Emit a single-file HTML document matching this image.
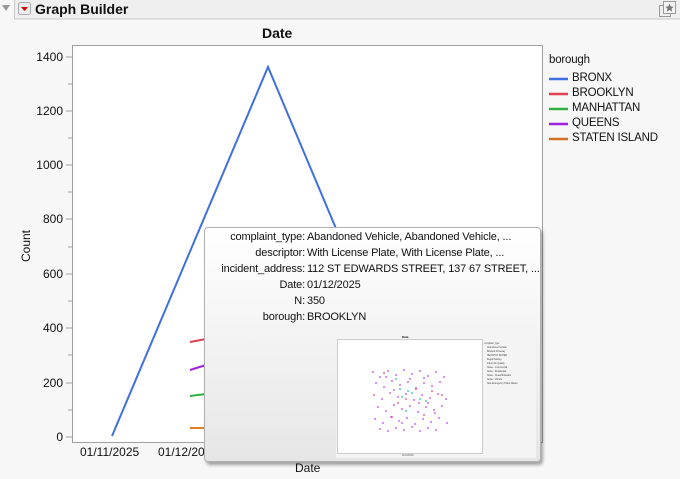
<!DOCTYPE html>
<html><head><style>
*{margin:0;padding:0;box-sizing:border-box}
body{width:680px;height:479px;background:#f7f7f7;font-family:"Liberation Sans",sans-serif;position:relative;overflow:hidden;color:#111}
.t{position:absolute;font-size:12px;white-space:nowrap}
.lg{font-size:11.5px;letter-spacing:-0.2px}
.tip{position:absolute;left:204px;top:227px;width:337px;height:235px;border:1px solid #b0b0b0;border-radius:4px;background:linear-gradient(#ffffff,#e6e6e6);box-shadow:2px 3px 3px rgba(0,0,0,.35)}
.tip .k{position:absolute;right:235px;font-size:11px;text-align:right;white-space:nowrap;letter-spacing:-0.15px}
.tip .v{position:absolute;left:102px;font-size:11px;white-space:nowrap;letter-spacing:-0.15px}
</style></head><body>
<svg style="position:absolute;left:0;top:0" width="680" height="479">
<rect x="14.5" y="-1" width="680" height="20" fill="#efefef" stroke="#c8c8c8"/>
<polygon points="2,5 10,5 6,11" fill="#999"/>
<rect x="18.5" y="2.5" width="12" height="12" rx="2" fill="#eee" stroke="#aaa"/>
<polygon points="21,7 28,7 24.5,11" fill="#c00"/>
<rect x="659.5" y="5.5" width="11" height="11" fill="#efefef" stroke="#999"/>
<rect x="663.5" y="1.5" width="12" height="12" fill="#f4f4f4" stroke="#999"/>
<polygon points="669.5,3.5 670.8,6.5 673.8,6.7 671.5,8.6 672.3,11.6 669.5,10 666.7,11.6 667.5,8.6 665.2,6.7 668.2,6.5" fill="#777"/>
<rect x="72.5" y="45.5" width="470" height="397" fill="#fff" stroke="#a0a0a0"/>
<g stroke="#a0a0a0">
<line x1="66" y1="57" x2="72" y2="57"/><line x1="68" y1="84" x2="72" y2="84"/>
<line x1="66" y1="111" x2="72" y2="111"/><line x1="68" y1="138" x2="72" y2="138"/>
<line x1="66" y1="165" x2="72" y2="165"/><line x1="68" y1="192" x2="72" y2="192"/>
<line x1="66" y1="219" x2="72" y2="219"/><line x1="68" y1="247" x2="72" y2="247"/>
<line x1="66" y1="274" x2="72" y2="274"/><line x1="68" y1="301" x2="72" y2="301"/>
<line x1="66" y1="328" x2="72" y2="328"/><line x1="68" y1="355" x2="72" y2="355"/>
<line x1="66" y1="383" x2="72" y2="383"/><line x1="68" y1="410" x2="72" y2="410"/>
<line x1="66" y1="437" x2="72" y2="437"/>
</g>
<polyline points="112,436 268,67 340,238" fill="none" stroke="#3f6fe0" stroke-width="2"/>
<line x1="190" y1="342" x2="206" y2="339" stroke="#e04050" stroke-width="2"/>
<line x1="190" y1="370" x2="206" y2="365" stroke="#a020e0" stroke-width="2"/>
<line x1="190" y1="396" x2="206" y2="394" stroke="#30b040" stroke-width="2"/>
<line x1="190" y1="428" x2="206" y2="428" stroke="#e08020" stroke-width="2"/>
<g stroke-width="2.5">
<line x1="549" y1="79" x2="568" y2="79" stroke="#3f6fe0"/>
<line x1="549" y1="94" x2="568" y2="94" stroke="#e04050"/>
<line x1="549" y1="109" x2="568" y2="109" stroke="#30b040"/>
<line x1="549" y1="124" x2="568" y2="124" stroke="#a020e0"/>
<line x1="549" y1="139" x2="568" y2="139" stroke="#d07020"/>
</g>
</svg>
<div class="t" style="left:35px;top:1px;font-size:14px;font-weight:bold">Graph Builder</div>
<div class="t" style="left:262px;top:25px;font-size:14px;font-weight:bold">Date</div>
<div class="t" style="left:0;top:50px;width:63px;text-align:right">1400</div>
<div class="t" style="left:0;top:104px;width:63px;text-align:right">1200</div>
<div class="t" style="left:0;top:158px;width:63px;text-align:right">1000</div>
<div class="t" style="left:0;top:212px;width:63px;text-align:right">800</div>
<div class="t" style="left:0;top:267px;width:63px;text-align:right">600</div>
<div class="t" style="left:0;top:321px;width:63px;text-align:right">400</div>
<div class="t" style="left:0;top:376px;width:63px;text-align:right">200</div>
<div class="t" style="left:0;top:430px;width:63px;text-align:right">0</div>
<div class="t" style="left:19px;top:262px;transform:rotate(-90deg);transform-origin:left top">Count</div>
<div class="t" style="left:80px;top:445px">01/11/2025</div>
<div class="t" style="left:158px;top:445px">01/12/2025</div>
<div class="t" style="left:295px;top:461px">Date</div>
<div class="t lg" style="left:549px;top:54px">borough</div>
<div class="t lg" style="left:572px;top:72px">BRONX</div>
<div class="t lg" style="left:572px;top:87px">BROOKLYN</div>
<div class="t lg" style="left:572px;top:102px">MANHATTAN</div>
<div class="t lg" style="left:572px;top:117px">QUEENS</div>
<div class="t lg" style="left:572px;top:132px">STATEN ISLAND</div>
<div class="tip">
<div class="k" style="top:3px">complaint_type:</div><div class="v" style="top:3px">Abandoned Vehicle, Abandoned Vehicle, ...</div>
<div class="k" style="top:19px">descriptor:</div><div class="v" style="top:19px">With License Plate, With License Plate, ...</div>
<div class="k" style="top:35px">incident_address:</div><div class="v" style="top:35px">112 ST EDWARDS STREET, 137 67 STREET, ...</div>
<div class="k" style="top:51px">Date:</div><div class="v" style="top:51px">01/12/2025</div>
<div class="k" style="top:67px">N:</div><div class="v" style="top:67px">350</div>
<div class="k" style="top:83px">borough:</div><div class="v" style="top:83px">BROOKLYN</div>
<svg style="position:absolute;left:131px;top:105px" width="200" height="125">
<rect x="0" y="0" width="200" height="125" fill="#f4f4f4"/>
<text x="66" y="5" font-size="3" font-weight="bold" font-family="Liberation Sans">Date</text>
<rect x="1.5" y="6.5" width="145" height="114" fill="#fff" stroke="#ccc"/>
<g font-size="2.3" font-family="Liberation Sans" fill="#444">
<text x="148" y="11">complaint_type</text>
<text x="151" y="15">Abandoned Vehicle</text><text x="151" y="19">Blocked Driveway</text>
<text x="151" y="23">HEAT/HOT WATER</text><text x="151" y="27">Illegal Parking</text>
<text x="151" y="31">Indoor Air Quality</text><text x="151" y="35">Noise - Commercial</text>
<text x="151" y="39">Noise - Residential</text><text x="151" y="43">Noise - Street/Sidewalk</text>
<text x="151" y="47">Noise - Vehicle</text><text x="151" y="51">Non-Emergency Police Matter</text>
</g>
<g fill="#c040f0">
<circle cx="37" cy="39" r=".9"/><circle cx="44" cy="44" r=".9"/><circle cx="52" cy="38" r=".9"/><circle cx="60" cy="42" r=".9"/><circle cx="68" cy="37" r=".9"/><circle cx="76" cy="41" r=".9"/><circle cx="84" cy="38" r=".9"/><circle cx="92" cy="43" r=".9"/><circle cx="100" cy="39" r=".9"/><circle cx="108" cy="44" r=".9"/>
<circle cx="40" cy="50" r=".9"/><circle cx="48" cy="54" r=".9"/><circle cx="56" cy="48" r=".9"/><circle cx="64" cy="52" r=".9"/><circle cx="72" cy="49" r=".9"/><circle cx="80" cy="55" r=".9"/><circle cx="88" cy="50" r=".9"/><circle cx="96" cy="53" r=".9"/><circle cx="104" cy="49" r=".9"/>
<circle cx="38" cy="62" r=".9"/><circle cx="46" cy="66" r=".9"/><circle cx="54" cy="60" r=".9"/><circle cx="62" cy="64" r=".9"/><circle cx="70" cy="61" r=".9"/><circle cx="78" cy="67" r=".9"/><circle cx="86" cy="62" r=".9"/><circle cx="94" cy="65" r=".9"/><circle cx="102" cy="61" r=".9"/><circle cx="110" cy="66" r=".9"/>
<circle cx="42" cy="74" r=".9"/><circle cx="50" cy="78" r=".9"/><circle cx="58" cy="72" r=".9"/><circle cx="66" cy="76" r=".9"/><circle cx="74" cy="73" r=".9"/><circle cx="82" cy="79" r=".9"/><circle cx="90" cy="74" r=".9"/><circle cx="98" cy="77" r=".9"/><circle cx="106" cy="73" r=".9"/>
<circle cx="39" cy="86" r=".9"/><circle cx="47" cy="90" r=".9"/><circle cx="55" cy="84" r=".9"/><circle cx="63" cy="88" r=".9"/><circle cx="71" cy="85" r=".9"/><circle cx="79" cy="91" r=".9"/><circle cx="87" cy="86" r=".9"/><circle cx="95" cy="89" r=".9"/><circle cx="103" cy="85" r=".9"/><circle cx="111" cy="90" r=".9"/>
<circle cx="44" cy="96" r=".9"/><circle cx="52" cy="98" r=".9"/><circle cx="60" cy="95" r=".9"/><circle cx="68" cy="97" r=".9"/><circle cx="76" cy="94" r=".9"/><circle cx="84" cy="98" r=".9"/><circle cx="92" cy="95" r=".9"/><circle cx="100" cy="97" r=".9"/>
<circle cx="50" cy="44" r=".9"/><circle cx="88" cy="45" r=".9"/><circle cx="66" cy="90" r=".9"/><circle cx="99" cy="80" r=".9"/><circle cx="58" cy="57" r=".9"/><circle cx="83" cy="70" r=".9"/>
</g>
<g fill="#e04070">
<circle cx="48" cy="40" r=".9"/><circle cx="74" cy="46" r=".9"/><circle cx="96" cy="58" r=".9"/><circle cx="62" cy="70" r=".9"/><circle cx="88" cy="82" r=".9"/><circle cx="106" cy="62" r=".9"/><circle cx="56" cy="84" r=".9"/><circle cx="80" cy="56" r=".9"/><circle cx="70" cy="66" r=".9"/><circle cx="92" cy="70" r=".9"/>
</g>
<g fill="#20c0a0">
<circle cx="60" cy="46" r=".9"/><circle cx="76" cy="60" r=".9"/><circle cx="90" cy="68" r=".9"/><circle cx="70" cy="78" r=".9"/><circle cx="84" cy="66" r=".9"/><circle cx="64" cy="56" r=".9"/><circle cx="72" cy="58" r=".9"/><circle cx="66" cy="64" r=".9"/>
</g>
<text x="66" y="123" font-size="2.3" font-family="Liberation Sans" fill="#555">01/12/2025</text>
</svg>
</div>
</body></html>
